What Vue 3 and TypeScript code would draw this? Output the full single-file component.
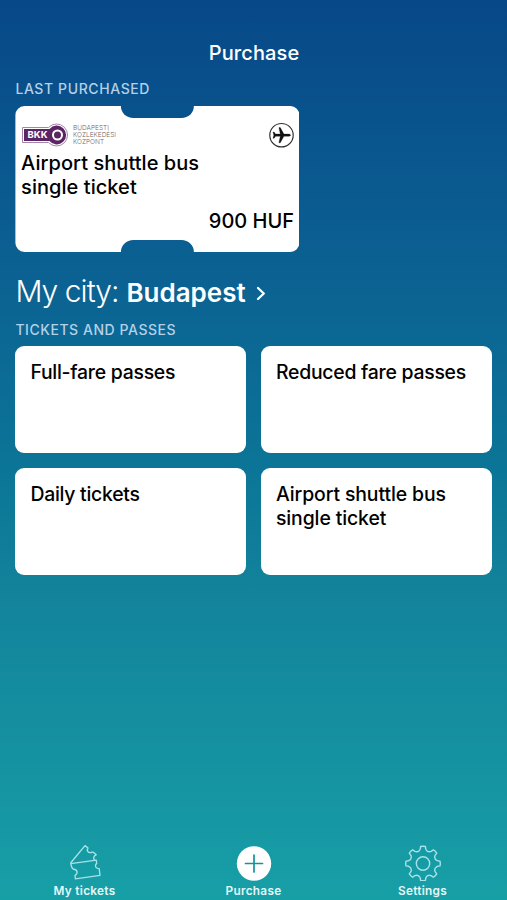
<script setup lang="ts">
interface Product {
  id: number
  lines: string[]
}

const products: Product[] = [
  { id: 1, lines: ['Full-fare passes'] },
  { id: 2, lines: ['Reduced fare passes'] },
  { id: 3, lines: ['Daily tickets'] },
  { id: 4, lines: ['Airport shuttle bus', 'single ticket'] },
]

// Outline of an eight-toothed gear centred on (18, 18)
function gearPath(teeth: number): string {
  const at = (deg: number, r: number): string => {
    const rad = ((deg - 90) * Math.PI) / 180
    return `${(18 + r * Math.cos(rad)).toFixed(2)} ${(18 + r * Math.sin(rad)).toFixed(2)}`
  }
  const step = 360 / teeth
  let d = `M${at(-8, 17.2)}`
  for (let i = 0; i < teeth; i++) {
    const a = i * step
    d += `Q${at(a, 17.5)} ${at(a + 8, 17.2)}`
    d += `L${at(a + 11, 14.6)}`
    d += `Q${at(a + step / 2, 11.6)} ${at(a + step - 11, 14.6)}`
    d += `L${at(a + step - 8, 17.2)}`
  }
  return d + 'Z'
}

const gear: string = gearPath(8)
</script>

<template>
  <div class="screen">
    <header class="title">Purchase</header>

    <main class="content">
      <h2 class="section last">LAST PURCHASED</h2>
      <article class="ticket">
        <div class="ticket-top">
          <div class="brand">
            <svg class="bkk" width="48" height="24" viewBox="0 0 48 24">
              <path
                d="M1.5 4.5H27.5A11 11 0 1 1 27.5 19.5H1.5Z"
                fill="#fff"
                stroke="#a586ab"
                stroke-width="1"
              />
              <path d="M3 6H28.5A9.4 9.4 0 1 1 28.5 18H3Z" fill="#5b2463" />
              <circle cx="36.5" cy="12" r="4.5" fill="none" stroke="#fff" stroke-width="2" />
              <text x="6.5" y="15.4" class="bkk-text" textLength="20">BKK</text>
            </svg>
            <div class="brand-name">
              <span>BUDAPESTI</span>
              <span>KÖZLEKEDÉSI</span>
              <span>KÖZPONT</span>
            </div>
          </div>
          <svg class="plane" width="26" height="26" viewBox="0 0 26 26">
            <circle cx="13.5" cy="13.2" r="11.7" fill="#fff" stroke="#333" stroke-width="1.2" />
            <path
              d="M22.6 13.2C22.6 12.5 21.4 12.1 20 12.1H15.9L12.3 5.6H10.9L12.3 12.1H7.6L6.1 10.1H5L5.8 13.2L5 16.3H6.1L7.6 14.3H12.3L10.9 20.8H12.3L15.9 14.3H20C21.4 14.3 22.6 13.9 22.6 13.2Z"
              fill="#111"
              stroke="#111"
              stroke-width=".3"
              stroke-linejoin="round"
            />
          </svg>
        </div>
        <div class="ticket-name">Airport shuttle bus<br />single ticket</div>
        <div class="price">900 HUF</div>
      </article>

      <div class="city">
        <span class="city-label">My city:</span>
        <span class="city-name">Budapest</span>
        <svg class="chevron" width="10" height="16" viewBox="0 0 10 16">
          <path
            d="M2 2L7.8 7.5L2 13"
            fill="none"
            stroke="#fff"
            stroke-width="2.3"
            stroke-linecap="round"
            stroke-linejoin="round"
          />
        </svg>
      </div>

      <h2 class="section passes">TICKETS AND PASSES</h2>
      <div class="grid">
        <div v-for="p in products" :key="p.id" class="card">
          <div v-for="line in p.lines" :key="line">{{ line }}</div>
        </div>
      </div>
    </main>

    <nav class="tabs">
      <div class="tab dim">
        <svg width="36" height="38" viewBox="0 0 36 38">
          <g
            fill="none"
            stroke="currentColor"
            stroke-width="1.35"
            stroke-linejoin="round"
            stroke-linecap="round"
          >
            <path
              d="M3.8 19.8L18 2.6L21 5C19.4 7.2 20.8 10.2 24 9.5C25.2 9.2 25.8 8.8 26.4 9.2L29.2 11.8C26.6 13 26.2 14.6 27.2 16.6"
            />
            <path
              d="M3.8 20.6L29.3 17.2L29.7 20.4C27.6 22 28 25.6 32.2 25.7L33 32.4L8.4 35.8L8 32.4C11.2 30.6 10.8 26.6 6.2 26C4.6 25.4 4.4 23.8 3.8 20.6Z"
            />
          </g>
        </svg>
        <span class="tab-label">My tickets</span>
      </div>
      <div class="tab">
        <svg width="36" height="38" viewBox="0 0 36 38">
          <circle cx="18" cy="20.5" r="17.2" fill="#fff" />
          <path
            d="M18 12V29M9.5 20.5H26.5"
            stroke="#12939f"
            stroke-width="1.7"
            stroke-linecap="round"
          />
        </svg>
        <span class="tab-label">Purchase</span>
      </div>
      <div class="tab dim">
        <svg width="36" height="38" viewBox="0 0 36 38">
          <g
            transform="translate(0 2.5)"
            fill="none"
            stroke="currentColor"
            stroke-width="1.4"
            stroke-linejoin="round"
          >
            <path :d="gear" />
            <circle cx="18" cy="18" r="6.7" />
          </g>
        </svg>
        <span class="tab-label">Settings</span>
      </div>
    </nav>
  </div>
</template>

<style>
body {
  margin: 0;
}
</style>

<style scoped>
.screen {
  box-sizing: border-box;
  width: 507px;
  height: 900px;
  overflow: hidden;
  display: flex;
  flex-direction: column;
  padding-top: 40.5px;
  background: linear-gradient(
    180deg,
    #074888 0%,
    #0b6192 30%,
    #0b7597 52%,
    #12829b 65%,
    #179fa6 100%
  );
  font-family: Inter, 'Liberation Sans', sans-serif;
  color: #fff;
}

.title {
  height: 24px;
  line-height: 24px;
  text-align: center;
  font-size: 20px;
  font-weight: 500;
  letter-spacing: 0.1px;
  padding-left: 1px;
}

.content {
  display: flex;
  flex-direction: column;
  align-items: flex-start;
  padding: 0 15px 0 15.4px;
}

.section {
  margin: 0;
  height: 18px;
  line-height: 18px;
  font-size: 14px;
  font-weight: 500;
  color: #b3d1e8;
}

.last {
  margin-top: 15.5px;
  letter-spacing: 0.6px;
}

.ticket {
  box-sizing: border-box;
  width: 284px;
  height: 146px;
  margin-top: 8px;
  padding: 16px 5.3px 0 5.7px;
  display: flex;
  flex-direction: column;
  background: #fff;
  color: #000;
  font-size: 20px;
  font-weight: 500;
  clip-path: path(
    'M9 0H105.5C105.5 7 111 12 118 12H166C173 12 178.5 7 178.5 0H275A9 9 0 0 1 284 9V137A9 9 0 0 1 275 146H178.5C178.5 139 173 134 166 134H118C111 134 105.5 139 105.5 146H9A9 9 0 0 1 0 137V9A9 9 0 0 1 9 0Z'
  );
}

.ticket-top {
  display: flex;
  justify-content: space-between;
  height: 28px;
}

.brand {
  display: flex;
  gap: 4px;
}

.bkk {
  margin-top: 1px;
}

.bkk-text {
  font-size: 9.5px;
  font-weight: 700;
  fill: #fff;
}

.brand-name {
  display: flex;
  flex-direction: column;
  padding-top: 3px;
  font-size: 6.5px;
  font-weight: 300;
  line-height: 7px;
  color: #666;
}

.ticket-name {
  padding-top: 1px;
  line-height: 24.4px;
  letter-spacing: 0.05px;
}

.price {
  margin-top: 9px;
  line-height: 24px;
  text-align: right;
}

.city {
  display: flex;
  align-items: baseline;
  height: 36px;
  margin-top: 21px;
  line-height: 36px;
  white-space: nowrap;
}

.city-label {
  width: 111px;
  font-size: 30px;
  font-weight: 300;
  letter-spacing: -0.95px;
}

.city-name {
  width: 130px;
  font-size: 26px;
  font-weight: 600;
}

.passes {
  margin-top: 12px;
  letter-spacing: 0.55px;
}

.grid {
  display: grid;
  grid-template-columns: 231px 231px;
  grid-auto-rows: 107px;
  gap: 15px 14.6px;
  margin-top: 7px;
}

.card {
  box-sizing: border-box;
  padding: 15px;
  border-radius: 9px;
  background: #fff;
  color: #000;
  font-size: 19.4px;
  font-weight: 500;
  letter-spacing: -0.25px;
  line-height: 23.5px;
}

.card:last-child {
  letter-spacing: -0.1px;
}

.tabs {
  display: grid;
  grid-template-columns: 1fr 1fr 1fr;
  margin-top: auto;
  height: 57px;
}

.tab {
  display: flex;
  flex-direction: column;
  align-items: center;
}

.tab-label {
  height: 16px;
  margin-top: 2px;
  line-height: 16px;
  font-size: 11.8px;
  font-weight: 600;
  letter-spacing: 0.3px;
  color: #e4f7f8;
}

.dim svg {
  color: #a6e3e6;
}
</style>
